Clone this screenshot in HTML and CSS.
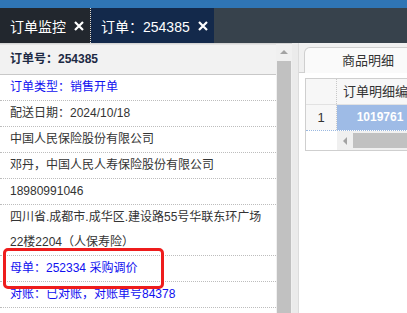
FILE: index.html
```html
<!DOCTYPE html>
<html lang="zh-CN">
<head>
    <meta charset="UTF-8">
    <title>订单：254385</title>
    <link rel="stylesheet" href="styles.css">
</head>
<body>
    <div class="topline"></div>
    <div class="tabbar">
        <div class="tab tab-home">
            <span>订单监控</span>
            <svg class="close" width="10" height="10" viewBox="0 0 10 10"><path d="M1 1L9 9M9 1L1 9" stroke="#fff" stroke-width="2.2"/></svg>
        </div>
        <div class="tab tab-active">
            <span>订单：254385</span>
            <svg class="close" width="10" height="10" viewBox="0 0 10 10"><path d="M1 1L9 9M9 1L1 9" stroke="#fff" stroke-width="2.2"/></svg>
        </div>
    </div>

    <div class="main">
        <div class="left">
            <div class="info">
                <div class="info-head">订单号：254385</div>
                <div class="row link">订单类型：销售开单</div>
                <div class="row">配送日期：2024/10/18</div>
                <div class="row">中国人民保险股份有限公司</div>
                <div class="row">邓丹，中国人民人寿保险股份有限公司</div>
                <div class="row">18980991046</div>
                <div class="row">四川省.成都市.成华区.建设路55号华联东环广场<br>22楼2204（人保寿险）</div>
                <div class="row link">母单：252334 采购调价</div>
                <div class="row link">对账：已对账，对账单号84378</div>
            </div>
            <div class="vscroll">
                <div class="arrow-up"></div>
                <div class="vthumb"></div>
            </div>
        </div>
        <div class="splitter"></div>
        <div class="right">
            <div class="tabs-strip">
                <div class="detail-tab">商品明细</div>
            </div>
            <div class="tab-body">
                <div class="grid">
                    <div class="grid-row grid-head">
                        <div class="cell-num"></div>
                        <div class="cell">订单明细编号</div>
                    </div>
                    <div class="grid-row grid-data">
                        <div class="cell-num">1</div>
                        <div class="cell selected">1019761</div>
                    </div>
                    <div class="hscroll">
                        <div class="hscroll-gap"></div>
                        <div class="arrow-left"></div>
                        <div class="hthumb"></div>
                    </div>
                </div>
            </div>
        </div>
    </div>

    <div class="highlight"></div>
</body>
</html>
```

FILE: styles.css
```css
body {
    margin: 0;
    width: 407px;
    height: 313px;
    overflow: hidden;
    font-family: "Liberation Sans", "Noto Sans CJK SC", sans-serif;
    font-size: 12px;
    color: #333;
    background: #fff;
    position: relative;
}

.topline {
    height: 8px;
    background: #2f75b5;
}

.tabbar {
    height: 35px;
    display: flex;
    background: #37424c;
    color: #fff;
    font-size: 14px;
}

.tab {
    display: flex;
    align-items: center;
    gap: 8px;
    padding-left: 10px;
}

.tab-home {
    width: 80px;
    background: #22272e;
    border-right: 1px dotted #ddd;
}

.tab-active {
    width: 113px;
    background: #13294b;
}

.main {
    display: flex;
    height: 270px;
}

.left {
    width: 292px;
    flex-shrink: 0;
    display: flex;
    border-top: 1px solid #d4d4d4;
}

.info {
    width: 276px;
}

.info-head {
    height: 29px;
    line-height: 29px;
    padding: 0 10px;
    background: #f2f2f2;
    font-weight: bold;
    color: #1d2a44;
    border-top: 1px solid #e4e4e4;
    border-bottom: 1px solid #c8c8c8;
}

.row {
    line-height: 25px;
    padding: 0 10px;
    border-bottom: 1px dotted #bdbdbd;
    white-space: nowrap;
}

.row.link {
    color: #1010f0;
}

.vscroll {
    width: 16px;
    background: #f0f0f0;
    display: flex;
    flex-direction: column;
    align-items: center;
}

.arrow-up {
    margin-top: 6px;
    width: 0;
    height: 0;
    border-left: 4px solid transparent;
    border-right: 4px solid transparent;
    border-bottom: 4px solid #a3a3a3;
}

.vthumb {
    margin-top: 7px;
    width: 14px;
    flex: 1;
    background: #c1c1c1;
}

.splitter {
    width: 6px;
    flex-shrink: 0;
    background: #ebebeb;
    border-right: 1px solid #dcdcdc;
}

.right {
    flex: 1;
    min-width: 0;
    overflow: hidden;
}

.tabs-strip {
    height: 29px;
    display: flex;
    align-items: flex-end;
    padding-left: 5px;
    background: #f0f0f0;
    border-bottom: 1px solid #d0d0d0;
}

.detail-tab {
    width: 126px;
    flex-shrink: 0;
    height: 25px;
    line-height: 25px;
    text-align: center;
    font-size: 13px;
    color: #333;
    background: #fafafa;
    border: 1px solid #cfcfcf;
    border-bottom: none;
    border-radius: 6px 6px 0 0;
    margin-bottom: -1px;
}

.tab-body {
    padding: 5px 0 0 6px;
}

.grid {
    width: 200px;
    border: 1px solid #cfcfcf;
    border-right: none;
}

.grid-row {
    display: flex;
    height: 25px;
}

.grid-head {
    background: #f7f7f7;
    border-bottom: 1px solid #e2e2e2;
    font-size: 13px;
}

.grid-data {
    border-bottom: 1px dotted #9ab8e0;
}

.cell-num {
    width: 30px;
    flex-shrink: 0;
    line-height: 25px;
    text-align: center;
    font-size: 13px;
    background: #f7f7f7;
    border-right: 1px dotted #c8c8c8;
}

.cell {
    width: 90px;
    flex-shrink: 0;
    line-height: 25px;
    text-align: center;
    white-space: nowrap;
}

.cell.selected {
    width: 86px;
    background: #9ebbe6;
    color: #fff;
    font-weight: bold;
    font-size: 12px;
}

.hscroll {
    display: flex;
    align-items: center;
    height: 19px;
    background: #f0f0f0;
}

.hscroll-gap {
    width: 31px;
    height: 19px;
    background: #fff;
}

.arrow-left {
    margin-left: 6px;
    width: 0;
    height: 0;
    border-top: 4px solid transparent;
    border-bottom: 4px solid transparent;
    border-right: 4px solid #a3a3a3;
}

.hthumb {
    margin-left: 6px;
    flex: 1;
    height: 15px;
    background: #c1c1c1;
}

.highlight {
    position: absolute;
    left: 3px;
    top: 248px;
    width: 155px;
    height: 35px;
    border: 3px solid #ee1c1c;
    border-radius: 5px;
}
```
